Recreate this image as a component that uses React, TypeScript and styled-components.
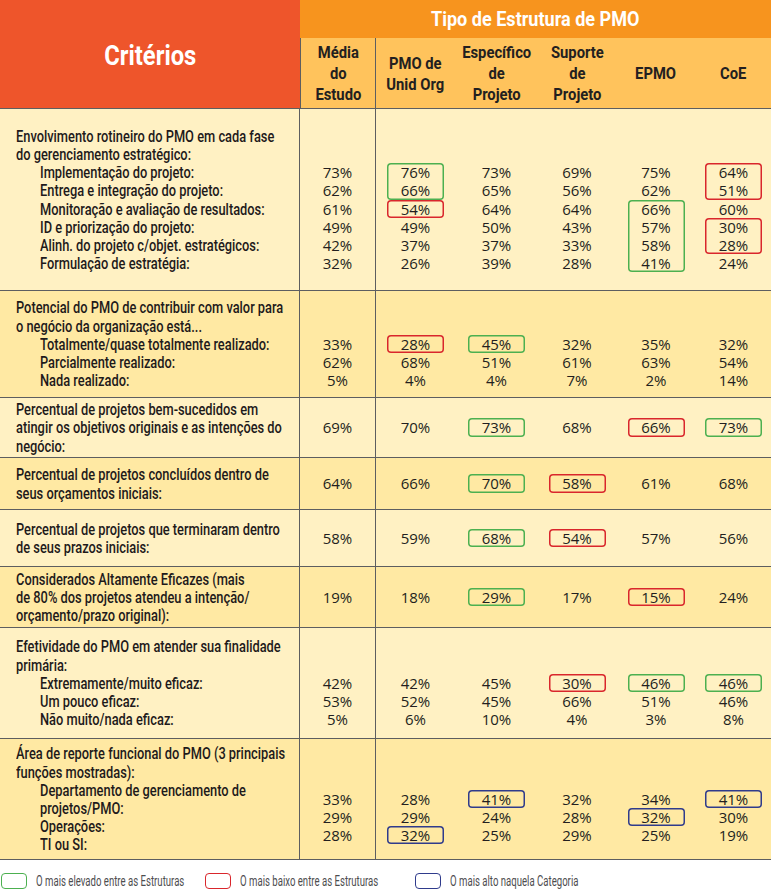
import React from "react";
import styled, { createGlobalStyle } from "styled-components";

const LH = 18.2;
const COLS = "300px 76px 79px 83px 78px 80px 75px";
const SANS = `Roboto, "Liberation Sans", sans-serif`;
const RULE = "1.5px solid #5d5e60";

const GlobalStyle = createGlobalStyle`
  body {
    margin: 0;
    background: #ffffff;
  }
`;

type Tone = "g" | "r" | "b";
type Item = string | { c: Tone; v: string[] };
type Section = {
  title: string[];
  subs?: string[][];
  vals: Item[][];
  h: number;
  tone: "light" | "dark";
};

const sections: Section[] = [
  {
    title: ["Envolvimento rotineiro do PMO em cada fase", "do gerenciamento estratégico:"],
    subs: [
      ["Implementação do projeto:"],
      ["Entrega e integração do projeto:"],
      ["Monitoração e avaliação de resultados:"],
      ["ID e priorização do projeto:"],
      ["Alinh. do projeto c/objet. estratégicos:"],
      ["Formulação de estratégia:"],
    ],
    vals: [
      ["73%", "62%", "61%", "49%", "42%", "32%"],
      [{ c: "g", v: ["76%", "66%"] }, { c: "r", v: ["54%"] }, "49%", "37%", "26%"],
      ["73%", "65%", "64%", "50%", "37%", "39%"],
      ["69%", "56%", "64%", "43%", "33%", "28%"],
      ["75%", "62%", { c: "g", v: ["66%", "57%", "58%", "41%"] }],
      [{ c: "r", v: ["64%", "51%"] }, "60%", { c: "r", v: ["30%", "28%"] }, "24%"],
    ],
    h: 182,
    tone: "light",
  },
  {
    title: ["Potencial do PMO de contribuir com valor para", "o negócio da organização está..."],
    subs: [["Totalmente/quase totalmente realizado:"], ["Parcialmente realizado:"], ["Nada realizado:"]],
    vals: [
      ["33%", "62%", "5%"],
      [{ c: "r", v: ["28%"] }, "68%", "4%"],
      [{ c: "g", v: ["45%"] }, "51%", "4%"],
      ["32%", "61%", "7%"],
      ["35%", "63%", "2%"],
      ["32%", "54%", "14%"],
    ],
    h: 107,
    tone: "dark",
  },
  {
    title: ["Percentual de projetos bem-sucedidos em", "atingir os objetivos originais e as intenções do", "negócio:"],
    vals: [["69%"], ["70%"], [{ c: "g", v: ["73%"] }], ["68%"], [{ c: "r", v: ["66%"] }], [{ c: "g", v: ["73%"] }]],
    h: 60,
    tone: "light",
  },
  {
    title: ["Percentual de projetos concluídos dentro de", "seus orçamentos iniciais:"],
    vals: [["64%"], ["66%"], [{ c: "g", v: ["70%"] }], [{ c: "r", v: ["58%"] }], ["61%"], ["68%"]],
    h: 52,
    tone: "dark",
  },
  {
    title: ["Percentual de projetos que terminaram dentro", "de seus prazos iniciais:"],
    vals: [["58%"], ["59%"], [{ c: "g", v: ["68%"] }], [{ c: "r", v: ["54%"] }], ["57%"], ["56%"]],
    h: 57,
    tone: "light",
  },
  {
    title: ["Considerados Altamente Eficazes (mais", "de 80% dos projetos atendeu a intenção/", "orçamento/prazo original):"],
    vals: [["19%"], ["18%"], [{ c: "g", v: ["29%"] }], ["17%"], [{ c: "r", v: ["15%"] }], ["24%"]],
    h: 61,
    tone: "dark",
  },
  {
    title: ["Efetividade do PMO em atender sua finalidade", "primária:"],
    subs: [["Extremamente/muito eficaz:"], ["Um pouco eficaz:"], ["Não muito/nada eficaz:"]],
    vals: [
      ["42%", "53%", "5%"],
      ["42%", "52%", "6%"],
      ["45%", "45%", "10%"],
      [{ c: "r", v: ["30%"] }, "66%", "4%"],
      [{ c: "g", v: ["46%"] }, "51%", "3%"],
      [{ c: "g", v: ["46%"] }, "46%", "8%"],
    ],
    h: 111,
    tone: "light",
  },
  {
    title: ["Área de reporte funcional do PMO (3 principais", "funções mostradas):"],
    subs: [["Departamento de gerenciamento de", "projetos/PMO:"], ["Operações:"], ["TI ou SI:"]],
    vals: [
      ["33%", "29%", "28%"],
      ["28%", "29%", { c: "b", v: ["32%"] }],
      [{ c: "b", v: ["41%"] }, "24%", "25%"],
      ["32%", "28%", "29%"],
      ["34%", { c: "b", v: ["32%"] }, "25%"],
      [{ c: "b", v: ["41%"] }, "30%", "19%"],
    ],
    h: 121,
    tone: "dark",
  },
];

const toneColor: Record<Tone, string> = {
  g: "#4cb050",
  r: "#d9262c",
  b: "#2f3b8c",
};

const Page = styled.div`
  width: 771px;
  color: #231f20;
`;

// condensed type: the source uses a condensed grotesque, squeeze a regular face
const Squeeze = styled.span<{ $k: number; $center?: boolean }>`
  display: inline-block;
  white-space: nowrap;
  transform: scaleX(${(p) => p.$k});
  transform-origin: ${(p) => (p.$center ? "center" : "left")} center;
`;

const Header = styled.div`
  display: grid;
  grid-template-columns: 300px 1fr;
  height: 109px;
  box-sizing: border-box;
  border-bottom: ${RULE};
`;

const CriteriaHead = styled.div`
  background: #ee552b;
  color: #ffffff;
  font-family: ${SANS};
  font-weight: 700;
  font-size: 27px;
  display: flex;
  align-items: center;
  justify-content: center;
  padding-top: 3px;
`;

const TypeBlock = styled.div`
  display: flex;
  flex-direction: column;
`;

const TypeTitle = styled.div`
  height: 38px;
  background: #f7941e;
  color: #ffffff;
  font-family: ${SANS};
  font-weight: 700;
  font-size: 21px;
  display: flex;
  align-items: center;
  justify-content: center;
`;

const SubHeads = styled.div`
  flex: 1;
  display: grid;
  grid-template-columns: 76px 79px 83px 78px 80px 75px;
  background: #ffc35c;
`;

const SubHead = styled.div<{ $ruled?: boolean }>`
  display: flex;
  align-items: center;
  justify-content: center;
  text-align: center;
  font-family: ${SANS};
  font-weight: 700;
  font-size: 17px;
  line-height: 21px;
  color: #231f20;
  box-sizing: border-box;
  padding-top: 1px;
  ${(p) => (p.$ruled ? `border-left: ${RULE}; border-right: ${RULE};` : "")}
`;

const Row = styled.div<{ $h: number; $tone: "light" | "dark" }>`
  display: grid;
  grid-template-columns: ${COLS};
  height: ${(p) => p.$h}px;
  box-sizing: border-box;
  border-bottom: ${RULE};
  background: ${(p) => (p.$tone === "light" ? "#fff1c3" : "#ffe9a3")};
`;

const LabelCell = styled.div`
  display: flex;
  flex-direction: column;
  justify-content: center;
  padding-left: 16px;
  border-right: ${RULE};
  font-family: ${SANS};
  font-weight: 500;
  font-size: 17px;
  line-height: ${LH}px;
  color: #1e1a1b;
  overflow: hidden;
`;

const Line = styled.div`
  white-space: nowrap;
`;

const SubItem = styled.div`
  padding-left: 24px;
`;

const ValueCell = styled.div<{ $pad: number; $ruled?: boolean }>`
  display: flex;
  flex-direction: column;
  justify-content: center;
  align-items: center;
  padding-top: ${(p) => p.$pad}px;
  font-family: "Open Sans", "Noto Sans", sans-serif;
  font-size: 15px;
  line-height: ${LH}px;
  color: #231f20;
  ${(p) => (p.$ruled ? `border-right: ${RULE};` : "")}
`;

const Value = styled.div`
  width: 57px;
  text-align: center;
  height: ${LH}px;
`;

const Mark = styled.div<{ $c: Tone }>`
  width: 57px;
  border-radius: 4px;
  box-shadow: inset 0 0 0 1.5px ${(p) => toneColor[p.$c]};
`;

const Legend = styled.div`
  display: grid;
  grid-template-columns: 204px 210px auto;
  align-items: center;
  height: 31px;
  box-sizing: border-box;
  padding: 10px 0 0 1px;
`;

const LegendItem = styled.div`
  display: flex;
  align-items: center;
  gap: 9px;
  font-family: ${SANS};
  font-weight: 400;
  font-size: 15px;
  color: #4d4d4f;
`;

const Swatch = styled.span<{ $c: Tone }>`
  flex: none;
  width: 26px;
  height: 16px;
  box-sizing: border-box;
  border: 1.5px solid ${(p) => toneColor[p.$c]};
  border-radius: 4px;
`;

const LABEL_K = 0.755;

function renderItems(items: Item[]) {
  return items.map((it, i) =>
    typeof it === "string" ? (
      <Value key={i}>{it}</Value>
    ) : (
      <Mark key={i} $c={it.c}>
        {it.v.map((v) => (
          <Value key={v}>{v}</Value>
        ))}
      </Mark>
    )
  );
}

const heads: { lines: string[]; ruled?: boolean }[] = [
  { lines: ["Média", "do", "Estudo"], ruled: true },
  { lines: ["PMO de", "Unid Org"] },
  { lines: ["Específico", "de", "Projeto"] },
  { lines: ["Suporte", "de", "Projeto"] },
  { lines: ["EPMO"] },
  { lines: ["CoE"] },
];

export default function App() {
  return (
    <Page>
      <GlobalStyle />
      <Header>
        <CriteriaHead>
          <Squeeze $k={0.88} $center>
            Critérios
          </Squeeze>
        </CriteriaHead>
        <TypeBlock>
          <TypeTitle>
            <Squeeze $k={0.86} $center>
              Tipo de Estrutura de PMO
            </Squeeze>
          </TypeTitle>
          <SubHeads>
            {heads.map((h, i) => (
              <SubHead key={i} $ruled={h.ruled}>
                <Squeeze $k={0.87} $center>
                  {h.lines.map((l, j) => (
                    <React.Fragment key={j}>
                      {j > 0 && <br />}
                      {l}
                    </React.Fragment>
                  ))}
                </Squeeze>
              </SubHead>
            ))}
          </SubHeads>
        </TypeBlock>
      </Header>

      {sections.map((s, si) => {
        const pad = s.subs ? s.title.length * LH : 0;
        return (
          <Row key={si} $h={s.h} $tone={s.tone}>
            <LabelCell>
              {s.title.map((t) => (
                <Line key={t}>
                  <Squeeze $k={LABEL_K}>{t}</Squeeze>
                </Line>
              ))}
              {s.subs?.map((sub, k) => (
                <SubItem key={k}>
                  {sub.map((t) => (
                    <Line key={t}>
                      <Squeeze $k={LABEL_K}>{t}</Squeeze>
                    </Line>
                  ))}
                </SubItem>
              ))}
            </LabelCell>
            {s.vals.map((col, ci) => (
              <ValueCell key={ci} $pad={pad} $ruled={ci === 0}>
                {renderItems(col)}
              </ValueCell>
            ))}
          </Row>
        );
      })}

      <Legend>
        <LegendItem>
          <Swatch $c="g" />
          <Squeeze $k={0.64}>O mais elevado entre as Estruturas</Squeeze>
        </LegendItem>
        <LegendItem>
          <Swatch $c="r" />
          <Squeeze $k={0.64}>O mais baixo entre as Estruturas</Squeeze>
        </LegendItem>
        <LegendItem>
          <Swatch $c="b" />
          <Squeeze $k={0.64}>O mais alto naquela Categoria</Squeeze>
        </LegendItem>
      </Legend>
    </Page>
  );
}
